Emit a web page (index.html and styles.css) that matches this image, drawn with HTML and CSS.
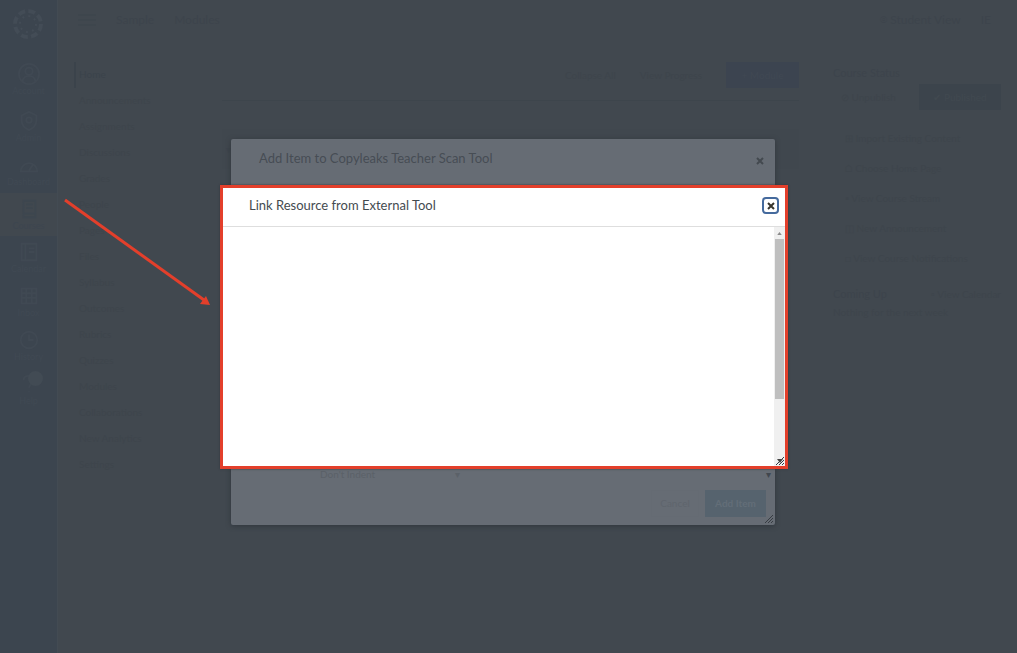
FILE: index.html
```html
<!DOCTYPE html>
<html lang="en">
<head>
<meta charset="utf-8">
<meta name="viewport" content="width=device-width, initial-scale=1">
<title>Link Resource from External Tool</title>
<link rel="stylesheet" href="styles.css">
</head>
<body>
<div class="page">
  <nav class="global-nav" aria-label="Global">
    <a class="logo" href="#" aria-label="Canvas"><svg width="34" height="34" viewBox="0 0 34 34"><circle cx="17" cy="17" r="13" fill="none" stroke="currentColor" stroke-width="4" stroke-dasharray="7 3.2"/><circle cx="17" cy="17" r="8" fill="none" stroke="currentColor" stroke-width="2" stroke-dasharray="2 4.3"/></svg></a>
    <a class="nav-item account" href="#"><svg viewBox="0 0 24 24"><circle cx="12" cy="12" r="11"/><circle cx="12" cy="9" r="4"/><path d="M5 20c1-8 13-8 14 0"/></svg>Account</a>
    <a class="nav-item" href="#"><svg viewBox="0 0 24 24"><path d="M12 2l8 4v6c0 5-4 8-8 10-4-2-8-5-8-10V6z"/><circle cx="12" cy="11" r="3"/></svg>Admin</a>
    <a class="nav-item" href="#"><svg viewBox="0 0 24 24"><path d="M3 19a9 9 0 1 1 18 0zM12 18l4-6"/></svg>Dashboard</a>
    <a class="nav-item active" href="#"><svg viewBox="0 0 24 24"><path d="M6 3h13v18H6zM9 7h7M9 11h7M6 17h13"/></svg>Courses</a>
    <a class="nav-item" href="#"><svg viewBox="0 0 24 24"><path d="M4 3h16v18H4zM8 3v18M12 8h6M12 12h6"/></svg>Calendar</a>
    <a class="nav-item" href="#"><svg viewBox="0 0 24 24"><path d="M4 4h16v16H4zM4 9h16M9 4v16M15 4v16M4 14h16"/></svg>Inbox</a>
    <a class="nav-item" href="#"><svg viewBox="0 0 24 24"><circle cx="12" cy="12" r="9"/><path d="M12 6v6h5"/></svg>History</a>
    <a class="nav-item" href="#"><svg viewBox="0 0 24 24"><path d="M6 8c0-7 12-6 11 0 0 4-5 4-5 8M12 20v1"/></svg><span class="badge"></span>Help</a>
  </nav>
  <div class="content">
    <header class="topbar">
      <button class="ghost" type="button" aria-label="Menu"><svg class="burger" viewBox="0 0 18 12"><path d="M0 1h18M0 6h18M0 11h18"/></svg></button>
      <a href="#">Sample</a><a href="#">Modules</a>
      <button class="ghost student" type="button">⌾ Student View</button>
      <button class="ghost" type="button">IE</button>
    </header>
    <div class="columns">
      <nav class="course-nav" aria-label="Course">
        <a class="current" href="#">Home</a><a href="#">Announcements</a><a href="#">Assignments</a><a href="#">Discussions</a><a href="#">Grades</a><a href="#">People</a><a href="#">Pages</a><a href="#">Files</a><a href="#">Syllabus</a><a href="#">Outcomes</a><a href="#">Rubrics</a><a href="#">Quizzes</a><a href="#">Modules</a><a href="#">Collaborations</a><a href="#">New Analytics</a><a href="#">Settings</a>
      </nav>
      <main class="modules">
        <div class="toolbar"><button class="ghost" type="button">Collapse All</button><button class="ghost" type="button">View Progress</button><button class="add-module" type="button">+ Module</button></div>
        <section class="module"><span class="caret">▾</span></section>
      </main>
      <aside class="sidebar">
        <h2>Course Status</h2>
        <div class="status"><button class="ghost" type="button">⊘ Unpublish</button><button class="published" type="button">✔ Published</button></div>
        <ul class="actions">
          <li><a href="#">⊞ Import Existing Content</a></li>
          <li><a href="#">⌂ Choose Home Page</a></li>
          <li><a href="#">▪ View Course Stream</a></li>
          <li><a href="#">◫ New Announcement</a></li>
          <li><a href="#">□ View Course Notifications</a></li>
        </ul>
        <div class="coming"><h2>Coming Up</h2><a href="#">▫ View Calendar</a></div>
        <p>Nothing for the next week</p>
      </aside>
    </div>
  </div>
</div>

<div class="overlay">
  <section class="dialog back" aria-label="Add Item to Copyleaks Teacher Scan Tool">
    <header class="back-head"><h1>Add Item to Copyleaks Teacher Scan Tool</h1><button class="close" type="button" aria-label="Close item dialog"><svg viewBox="0 0 8 8"><path d="M1 1l6 6M7 1L1 7"/></svg></button></header>
    <div class="back-body"><span>Don't Indent</span><span class="mark">▾</span><span class="scroll-end">▾</span></div>
    <footer class="back-foot"><button class="cancel" type="button">Cancel</button><button class="add-item" type="button">Add Item</button></footer>
    <svg class="grip" viewBox="0 0 10 10"><path d="M1 9l8-8M4 9l5-5M7 9l2-2"/></svg>
  </section>
  <section class="dialog front" role="dialog" aria-label="Link Resource from External Tool">
    <header class="front-head"><h1>Link Resource from External Tool</h1><button class="close focused" type="button" aria-label="Close"><svg viewBox="0 0 8 8"><path d="M1 1l6 6M7 1L1 7"/></svg></button></header>
    <div class="front-body"><div class="scrollbar"><svg class="up" viewBox="0 0 6 4"><path d="M0 4l3-4 3 4z"/></svg><div class="thumb"></div></div></div>
    <svg class="grip" viewBox="0 0 10 10"><path d="M1 9l8-8M4 9l5-5M7 9l2-2"/><path class="tip" d="M2 3h6L5 7z"/></svg>
  </section>
</div>
<svg class="arrow" viewBox="0 0 150 110" aria-hidden="true"><path d="M5 5L144 105" fill="none" stroke="#e33f2b" stroke-width="3"/><path d="M150 110l-10-1 6-8z" fill="#e33f2b"/></svg>
</body>
</html>
```
FILE: styles.css
```css
* { box-sizing: border-box; }
body { margin: 0; font: 10px/14px Lato, "Open Sans", sans-serif; color: #3d444c; background: #41484f; overflow: hidden; }
a { color: inherit; text-decoration: none; }
button { font: inherit; color: inherit; padding: 0; border: 0; background: none; }
h1, h2, p, ul { margin: 0; padding: 0; font-weight: 400; }
ul { list-style: none; }
.page { display: flex; min-height: 100vh; }
.global-nav { width: 58px; flex: none; display: flex; flex-direction: column; background: #3c454f; color: #404953; font-size: 9px; border-right: 1px solid #434b53; }
.logo { height: 55px; padding: 7px 11px; color: #434c56; }
.nav-item { position: relative; height: 44px; display: flex; flex-direction: column; align-items: center; justify-content: center; line-height: 12px; }
.nav-item.account { height: 50px; }
.nav-item svg { width: 22px; height: 22px; fill: none; stroke: currentColor; stroke-width: 2; }
.nav-item.active { height: 43px; background: #41484f; color: #3d464f; }
.badge { position: absolute; top: 3px; left: 28px; width: 15px; height: 15px; border-radius: 50%; background: #424b54; }
.content { flex: 1; min-width: 0; }
.topbar { height: 39px; display: flex; align-items: center; gap: 20px; padding: 0 26px 0 20px; font-size: 12px; }
.burger { width: 18px; height: 12px; display: block; stroke: currentColor; stroke-width: 1; }
.student { margin-left: auto; }
.columns { display: flex; padding: 23px 16px 0; }
.course-nav { width: 148px; flex: none; display: flex; flex-direction: column; color: #3e454c; }
.course-nav a { height: 26px; padding-left: 5px; line-height: 25px; }
.course-nav .current { color: #3b434b; border-left: 2px solid #3b434b; padding-left: 3px; }
.modules { flex: 1; }
.toolbar { height: 39px; display: flex; justify-content: flex-end; align-items: flex-start; gap: 24px; line-height: 26px; color: #3e454c; border-bottom: 1px solid #3d454c; }
.add-module { width: 73px; height: 26px; background: #3c4450; color: #404853; }
.module { height: 40px; margin-top: 28px; background: #40474e; }
.caret { line-height: 40px; padding-left: 4px; }
.sidebar { width: 168px; flex: none; margin-left: 34px; color: #3e454c; }
.sidebar h2 { font-size: 11px; line-height: 22px; color: #3d444c; }
.status { display: flex; justify-content: space-between; padding-left: 8px; line-height: 26px; }
.published { width: 82px; height: 26px; background: #3c444c; color: #414950; }
.actions { padding: 13px 0 0 12px; }
.actions li { line-height: 30px; }
.coming { display: flex; justify-content: space-between; line-height: 22px; padding-top: 10px; }
.overlay { position: absolute; inset: 0; display: grid; grid-template-columns: 1fr; justify-items: center; align-items: start; padding: 139px 11px 0 0; }
.dialog { grid-area: 1 / 1; position: relative; display: flex; flex-direction: column; }
.dialog h1 { font-size: 13px; line-height: 18px; }
.close { width: 17px; height: 17px; display: grid; place-items: center; color: #43494f; }
.close svg { width: 8px; height: 8px; stroke: currentColor; stroke-width: 2; }
.back { width: min(544px, 90vw); height: 386px; background: #666c74; border-radius: 2px; box-shadow: 0 1px 5px #30363c; color: #5b6168; }
.back-head { height: 46px; display: flex; justify-content: space-between; padding: 10px 7px 0 28px; color: #474d54; }
.back-head .close { margin-top: 3px; }
.back-body { flex: 1; display: flex; align-items: flex-end; padding: 0 4px 0 89px; }
.mark { margin-left: 80px; }
.scroll-end { margin-left: auto; color: #41474e; }
.back-foot { height: 44px; display: flex; justify-content: flex-end; align-items: center; gap: 6px; padding-right: 9px; }
.cancel { width: 48px; height: 27px; color: #5f656d; border: 1px solid #656b73; }
.add-item { width: 61px; height: 27px; background: #56636e; color: #636e78; font-weight: 700; }
.grip { position: absolute; right: 1px; bottom: 1px; width: 10px; height: 10px; stroke: #373c42; fill: none; }
.front { width: min(568px, 94vw); height: 284px; margin: 46px 0 0 2px; background: #fff; border: 3px solid #e33f2b; box-shadow: 0 0 2px #30363c; color: #444b50; }
.front-head { height: 39px; display: flex; justify-content: space-between; padding: 8px 6px 0 26px; border-bottom: 1px solid #dedede; }
.focused { margin-top: 1px; border: 2px solid #456a9d; border-radius: 4px; color: #37342c; }
.front-body { flex: 1; display: flex; justify-content: flex-end; }
.scrollbar { width: 11px; background: #f0f0f0; display: flex; flex-direction: column; align-items: center; }
.up { width: 5px; height: 3px; margin: 5px 0 4px; fill: #8a8a8a; }
.thumb { width: 9px; height: 67%; background: #bfbfbf; }
.front .grip { right: 0; bottom: 0; }
.tip { fill: #444; stroke: none; }
.arrow { position: absolute; left: 60px; top: 195px; width: 150px; height: 110px; pointer-events: none; }
```
